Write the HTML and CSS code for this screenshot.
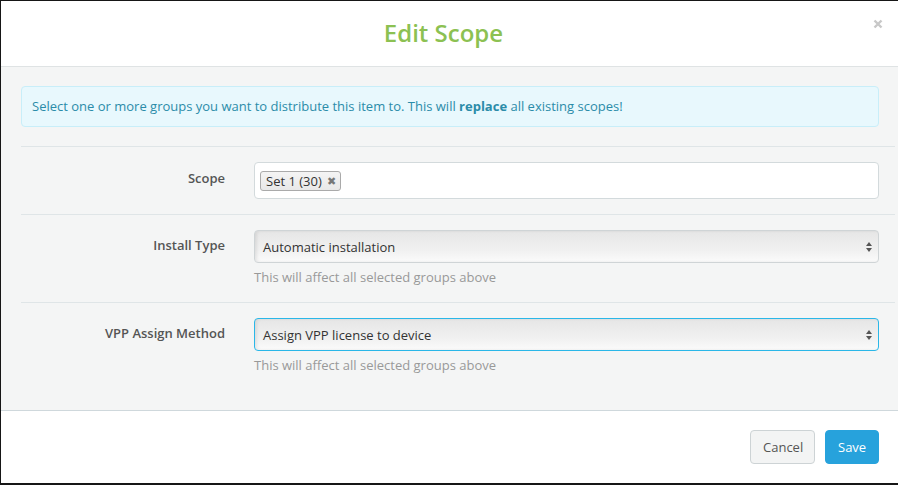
FILE: index.html
```html
<!DOCTYPE html>
<html lang="en">
<head>
    <meta charset="UTF-8">
    <title>Edit Scope</title>
    <link rel="stylesheet" href="styles.css">
</head>
<body>
    <div class="modal">
        <div class="modal-header">
            <h2 class="modal-title">Edit Scope</h2>
            <button class="close-btn" aria-label="Close">
                <svg width="10" height="10" viewBox="0 0 10 10"><path d="M1.5 1.5l7 7M8.5 1.5l-7 7" stroke="#c8c8c8" stroke-width="2.4" stroke-linecap="butt"/></svg>
            </button>
        </div>
        <div class="modal-body">
            <div class="alert">
                Select one or more groups you want to distribute this item to. This will <strong>replace</strong> all existing scopes!
            </div>
            <div class="form-row">
                <label class="form-label scope-label">Scope</label>
                <div class="form-field">
                    <div class="tag-input">
                        <span class="tag">Set 1 (30) <span class="tag-remove">&#x2716;</span></span>
                    </div>
                </div>
            </div>
            <div class="form-row">
                <label class="form-label">Install Type</label>
                <div class="form-field">
                    <div class="select">
                        <span>Automatic installation</span>
                        <span class="arrows"><i class="up"></i><i class="down"></i></span>
                    </div>
                    <p class="help">This will affect all selected groups above</p>
                </div>
            </div>
            <div class="form-row">
                <label class="form-label">VPP Assign Method</label>
                <div class="form-field">
                    <div class="select focused">
                        <span>Assign VPP license to device</span>
                        <span class="arrows"><i class="up"></i><i class="down"></i></span>
                    </div>
                    <p class="help">This will affect all selected groups above</p>
                </div>
            </div>
        </div>
        <div class="modal-footer">
            <button class="btn btn-default">Cancel</button>
            <button class="btn btn-primary">Save</button>
        </div>
    </div>
</body>
</html>
```

FILE: styles.css
```css
* {
    margin: 0;
    padding: 0;
    box-sizing: border-box;
}

body {
    background: #161616;
    font-family: 'Open Sans', Arial, sans-serif;
    font-size: 13px;
    color: #333;
    overflow: hidden;
}

.modal {
    margin: 1px 0 0 1px;
    width: 905px;
    height: 482px;
    background: #fff;
    display: flex;
    flex-direction: column;
}

.modal-header {
    height: 66px;
    border-bottom: 1px solid #dfe3e4;
    display: flex;
    align-items: center;
    justify-content: center;
    position: relative;
    padding-right: 20px;
}

.modal-title {
    color: #8cc152;
    font-size: 24px;
    font-weight: 600;
    margin-top: -2px;
}

.close-btn {
    position: absolute;
    top: 18px;
    right: 23px;
    border: none;
    background: none;
    width: 10px;
    height: 10px;
    display: flex;
}

.modal-body {
    background: #f4f5f5;
    padding: 19px 11px 0 20px;
    height: 344px;
    border-bottom: 1px solid #cfd8dc;
}

.alert {
    width: 858px;
    background: #e8f8fd;
    border: 1px solid #c8eef9;
    border-radius: 4px;
    color: #2b8ca9;
    padding: 10px 10px 11px 10px;
    line-height: 18px;
    margin-bottom: 19px;
}

.alert strong {
    font-weight: 700;
}

.form-row {
    display: flex;
    border-top: 1px solid #dfe5e7;
    padding: 15px 0;
}

.form-label {
    width: 204px;
    text-align: right;
    font-weight: 600;
    color: #555;
    padding-top: 6px;
    line-height: 18px;
}

.scope-label {
    padding-top: 7px;
}

.form-field {
    margin-left: 29px;
    width: 625px;
}

.tag-input {
    height: 37px;
    background: #fff;
    border: 1px solid #d3dadc;
    border-radius: 4px;
    padding: 7px 5px;
    display: flex;
    align-items: center;
}

.tag {
    display: inline-flex;
    align-items: center;
    height: 20px;
    background: linear-gradient(to bottom, #f4f4f4, #e8e8e8);
    border: 1px solid #aaa;
    border-radius: 3px;
    padding: 0 4px 0 5px;
    color: #333;
    line-height: 18px;
}

.tag-remove {
    color: #777;
    font-size: 11px;
    margin-left: 5px;
}

.select {
    height: 33px;
    border: 1px solid #cfd4d6;
    border-radius: 4px;
    background: linear-gradient(to bottom, #e6e6e6 0%, #f0f0f0 60%, #fbfbfb 100%);
    box-shadow: inset 2px 0 3px rgba(0, 0, 0, 0.08);
    display: flex;
    align-items: center;
    justify-content: space-between;
    padding: 0 6px 0 8px;
    color: #333;
}

.select.focused {
    border-color: #2ab7e8;
}

.arrows {
    display: flex;
    flex-direction: column;
    gap: 2px;
}

.arrows i {
    width: 0;
    height: 0;
    border-left: 3.5px solid transparent;
    border-right: 3.5px solid transparent;
}

.arrows .up {
    border-bottom: 4px solid #555;
}

.arrows .down {
    border-top: 4px solid #555;
}

.help {
    color: #999;
    margin-top: 5px;
    margin-bottom: 1px;
    line-height: 18px;
}

.modal-footer {
    flex: 1;
    display: flex;
    justify-content: flex-end;
    align-items: flex-start;
    gap: 10px;
    padding: 19px 27px 0 0;
}

.btn {
    height: 34px;
    border-radius: 4px;
    font-family: inherit;
    font-size: 13px;
    padding: 0 12px;
    border: 1px solid transparent;
}

.btn-default {
    background: #f3f4f4;
    border-color: #cdd3d5;
    color: #555;
    width: 65px;
}

.btn-primary {
    background: #27a2dc;
    border-color: #27a2dc;
    color: #fff;
    width: 54px;
}
```
